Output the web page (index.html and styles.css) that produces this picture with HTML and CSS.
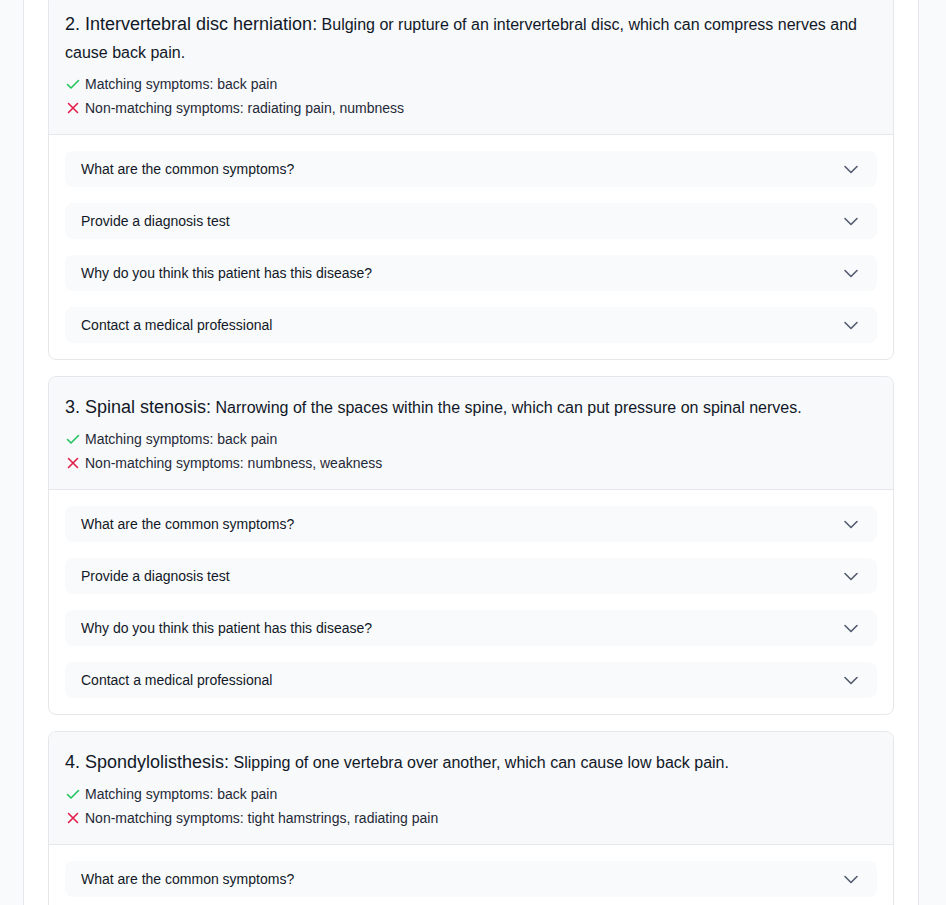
FILE: index.html
```html
<!DOCTYPE html>
<html lang="en">
<head>
<meta charset="utf-8">
<title>Possible conditions</title>
<link rel="stylesheet" href="styles.css">
</head>
<body>
<div class="page">
  <main class="container">
    <div class="list">
      <section class="card">
        <header class="card-head">
          <h3 class="title"><span class="name">2. Intervertebral disc herniation:</span> Bulging or rupture of an intervertebral disc, which can compress nerves and cause back pain.</h3>
          <p class="sym"><svg class="ic ok" viewBox="0 0 16 16"><path d="M2.5 8.5l3.5 3.5 7.5-7.5"/></svg>Matching symptoms: back pain</p>
          <p class="sym sym-no"><svg class="ic no" viewBox="0 0 16 16"><path d="M3.5 3.5l9 9M12.5 3.5l-9 9"/></svg>Non-matching symptoms: radiating pain, numbness</p>
        </header>
        <div class="card-body">
          <button class="q"><span>What are the common symptoms?</span><svg class="chev" viewBox="0 0 20 20"><path d="M4 7.5l6 6 6-6"/></svg></button>
          <button class="q"><span>Provide a diagnosis test</span><svg class="chev" viewBox="0 0 20 20"><path d="M4 7.5l6 6 6-6"/></svg></button>
          <button class="q"><span>Why do you think this patient has this disease?</span><svg class="chev" viewBox="0 0 20 20"><path d="M4 7.5l6 6 6-6"/></svg></button>
          <button class="q"><span>Contact a medical professional</span><svg class="chev" viewBox="0 0 20 20"><path d="M4 7.5l6 6 6-6"/></svg></button>
        </div>
      </section>

      <section class="card">
        <header class="card-head">
          <h3 class="title"><span class="name">3. Spinal stenosis:</span> Narrowing of the spaces within the spine, which can put pressure on spinal nerves.</h3>
          <p class="sym"><svg class="ic ok" viewBox="0 0 16 16"><path d="M2.5 8.5l3.5 3.5 7.5-7.5"/></svg>Matching symptoms: back pain</p>
          <p class="sym sym-no"><svg class="ic no" viewBox="0 0 16 16"><path d="M3.5 3.5l9 9M12.5 3.5l-9 9"/></svg>Non-matching symptoms: numbness, weakness</p>
        </header>
        <div class="card-body">
          <button class="q"><span>What are the common symptoms?</span><svg class="chev" viewBox="0 0 20 20"><path d="M4 7.5l6 6 6-6"/></svg></button>
          <button class="q"><span>Provide a diagnosis test</span><svg class="chev" viewBox="0 0 20 20"><path d="M4 7.5l6 6 6-6"/></svg></button>
          <button class="q"><span>Why do you think this patient has this disease?</span><svg class="chev" viewBox="0 0 20 20"><path d="M4 7.5l6 6 6-6"/></svg></button>
          <button class="q"><span>Contact a medical professional</span><svg class="chev" viewBox="0 0 20 20"><path d="M4 7.5l6 6 6-6"/></svg></button>
        </div>
      </section>

      <section class="card">
        <header class="card-head">
          <h3 class="title"><span class="name">4. Spondylolisthesis:</span> Slipping of one vertebra over another, which can cause low back pain.</h3>
          <p class="sym"><svg class="ic ok" viewBox="0 0 16 16"><path d="M2.5 8.5l3.5 3.5 7.5-7.5"/></svg>Matching symptoms: back pain</p>
          <p class="sym sym-no"><svg class="ic no" viewBox="0 0 16 16"><path d="M3.5 3.5l9 9M12.5 3.5l-9 9"/></svg>Non-matching symptoms: tight hamstrings, radiating pain</p>
        </header>
        <div class="card-body">
          <button class="q"><span>What are the common symptoms?</span><svg class="chev" viewBox="0 0 20 20"><path d="M4 7.5l6 6 6-6"/></svg></button>
          <button class="q"><span>Provide a diagnosis test</span><svg class="chev" viewBox="0 0 20 20"><path d="M4 7.5l6 6 6-6"/></svg></button>
          <button class="q"><span>Why do you think this patient has this disease?</span><svg class="chev" viewBox="0 0 20 20"><path d="M4 7.5l6 6 6-6"/></svg></button>
          <button class="q"><span>Contact a medical professional</span><svg class="chev" viewBox="0 0 20 20"><path d="M4 7.5l6 6 6-6"/></svg></button>
        </div>
      </section>
    </div>
  </main>
</div>
</body>
</html>
```

FILE: styles.css
```css
* { box-sizing: border-box; }
html, body { margin: 0; padding: 0; }
body {
  background: #f9fafb;
  font-family: "Liberation Sans", Arial, sans-serif;
  color: #111827;
  overflow: hidden;
}
.page {
  height: 905px;
  overflow: hidden;
}
.container {
  width: 896px;
  margin-left: 23px;
  min-height: 905px;
  background: #fff;
  border-left: 1px solid #e5e7eb;
  border-right: 1px solid #e5e7eb;
  padding: 0 24px;
}
.list {
  display: flex;
  flex-direction: column;
  gap: 16px;
  margin-top: -7px;
}
.card {
  border: 1px solid #e5e7eb;
  border-radius: 8px;
  background: #fff;
  overflow: hidden;
}
.card-head {
  background: #f8f9fb;
  border-bottom: 1px solid #e5e7eb;
  padding: 16px;
}
.title {
  margin: 0 0 7px;
  font-size: 16px;
  font-weight: normal;
  line-height: 28px;
  color: #111827;
}
.name {
  font-size: 18px;
}
.sym {
  display: flex;
  align-items: center;
  margin: 0;
  font-size: 14px;
  line-height: 20px;
  color: #1f2937;
}
.sym-no { margin-top: 4px; }
.ic {
  width: 16px;
  height: 16px;
  margin-right: 4px;
  fill: none;
  stroke-width: 1.6;
  stroke-linecap: round;
  stroke-linejoin: round;
  flex: none;
}
.ok { stroke: #22c55e; }
.no { stroke: #e11d48; }
.card-body {
  padding: 16px;
  display: flex;
  flex-direction: column;
  gap: 16px;
}
.q {
  display: flex;
  align-items: center;
  justify-content: space-between;
  width: 100%;
  height: 36px;
  padding: 0 16px;
  border: 0;
  border-radius: 8px;
  background: #f9fafb;
  font-family: inherit;
  font-size: 14px;
  color: #111827;
  text-align: left;
  cursor: pointer;
}
.chev {
  width: 20px;
  height: 20px;
  fill: none;
  stroke: #525c70;
  stroke-width: 1.6;
  stroke-linecap: round;
  stroke-linejoin: round;
}
```
